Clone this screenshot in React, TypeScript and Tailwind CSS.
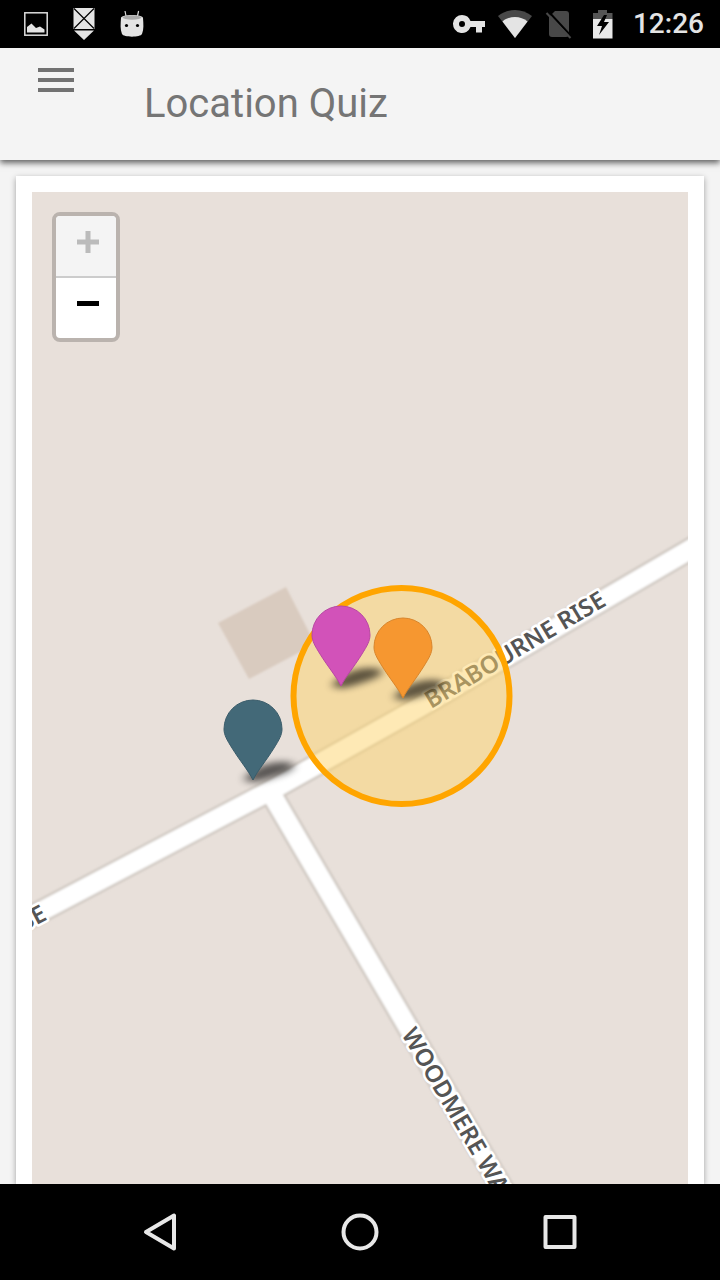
import { useState } from "react";

type PinProps = { x: number; y: number; color: string; edge: string };

function Pin({ x, y, color, edge }: PinProps) {
  return (
    <g transform={`translate(${x} ${y})`}>
      <path
        d="M-9 0 C-4 -8 10 -19 32 -18 C48 -17 40 -9 26 -5 C14 -1 0 5 -9 0Z"
        fill="#000"
        opacity="0.62"
        filter="url(#pin-shadow)"
      />
      <path
        d="M0 0 C-5 -10 -13 -19 -21 -32 C-26 -40 -29 -45 -29 -51 A29 29 0 0 1 29 -51 C29 -45 26 -40 21 -32 C13 -19 5 -10 0 0Z"
        fill={color}
        stroke={edge}
        strokeWidth="1"
      />
    </g>
  );
}

function MapDrawing() {
  return (
    <svg
      viewBox="32 192 656 992"
      preserveAspectRatio="xMidYMin slice"
      className="block h-full w-full"
      role="img"
      aria-label="Street map"
    >
      <defs>
        <filter id="pin-shadow" x="-50%" y="-80%" width="200%" height="260%">
          <feGaussianBlur stdDeviation="5 3.5" />
        </filter>
        <filter id="soft" x="-5%" y="-5%" width="110%" height="110%">
          <feGaussianBlur stdDeviation="0.8" />
        </filter>
      </defs>
      <g filter="url(#soft)">
        <path d="M218 623 L286 587 L310 634 L302 651 L249 679Z" fill="#d9cbbf" />
        <g fill="none" stroke="#d0c9c2" strokeWidth="24">
          <path d="M0 933 L150 854 L272 790 L420 707 L720 532" />
          <path d="M272 795 L392 1000 L522 1222" />
        </g>
        <g fill="none" stroke="#fff" strokeWidth="19">
          <path d="M0 933 L150 854 L272 790 L420 707 L720 532" />
          <path d="M272 795 L392 1000 L522 1222" />
        </g>
      </g>
      <g
        className="font-['Noto_Sans','Open_Sans',sans-serif] text-2xl font-semibold"
        fill="#555"
        stroke="#fff"
        strokeWidth="5"
        strokeLinejoin="round"
        paintOrder="stroke"
      >
        <text transform="translate(431 709) rotate(-30.6)">BRABOURNE RISE</text>
        <text transform="translate(401 1034) rotate(59.6)">WOODMERE WAY</text>
        <text transform="translate(48 919) rotate(-27.7)" textAnchor="end">
          BRABOURNE RISE
        </text>
      </g>
      <circle
        cx="401.5"
        cy="696"
        r="108"
        fill="#fdd36b"
        fillOpacity="0.5"
        stroke="#ffa500"
        strokeWidth="6"
      />
      <Pin x={341} y={686} color="#d252b9" edge="#b848a3" />
      <Pin x={403} y={698} color="#f69730" edge="#d9852b" />
      <Pin x={253} y={780} color="#436978" edge="#3a5c6a" />
    </svg>
  );
}

function StatusBar() {
  return (
    <div className="flex h-12 shrink-0 items-center justify-between bg-black pl-6 pr-4">
      <div className="flex items-center gap-6">
        <svg viewBox="0 0 24 24" className="size-6" aria-hidden="true">
          <rect x="0.8" y="0.8" width="22.4" height="22.4" fill="none" stroke="#ddd" strokeWidth="1.5" />
          <path d="M3 20.5 V15 L7.5 11.5 L12 16 L16 14.5 L20.5 17.5 V20.5Z" fill="#e4e4e4" />
        </svg>
        <svg viewBox="0 0 24 34" className="h-9 w-6" aria-hidden="true">
          <path d="M1.5 1 H22.5 V22 H1.5Z M2 23.5 H22 L12 33Z" fill="#e4e4e4" />
          <path d="M2 1.5 L22 21.5 M22 1.5 L2 21.5" stroke="#000" strokeWidth="1.2" />
        </svg>
        <svg viewBox="0 0 24 28" className="h-8 w-6" aria-hidden="true">
          <path d="M6 6 L5 1 M17.5 6 L18.6 1" stroke="#ddd" strokeWidth="1.2" />
          <path d="M1 8 C1 4 23 4 23 8 C23.4 14 24 19 22 24 C20.5 27.5 3.5 27.5 2 24 C0 19 0.6 14 1 8Z" fill="#e4e4e4" />
          <ellipse cx="12" cy="7.5" rx="9.5" ry="2.2" fill="#aaa" />
          <circle cx="6.5" cy="15.5" r="1.6" fill="#000" />
          <circle cx="17.5" cy="15.5" r="1.6" fill="#000" />
        </svg>
      </div>
      <div className="flex items-center">
        <svg viewBox="0 0 32 18" className="mr-3 h-5 w-8" aria-hidden="true">
          <path
            fillRule="evenodd"
            d="M9 0 A9 9 0 1 0 17.5 12 H23 V17.5 H29 V12 H32 V6 H17.5 A9 9 0 0 0 9 0Z M9 6 A3 3 0 1 1 9 12 A3 3 0 1 1 9 6Z"
            fill="#e4e4e4"
          />
        </svg>
        <svg viewBox="0 0 36 30" className="mr-3 h-8 w-9" aria-hidden="true">
          <path d="M1 7 C11 -1 25 -1 35 7 L18 29Z" fill="#484848" />
          <path d="M5.5 12.5 C12 6.5 24 6.5 30.5 12.5 L18 29Z" fill="#e4e4e4" />
        </svg>
        <svg viewBox="0 0 28 30" className="mr-5 h-8 w-7" aria-hidden="true">
          <path d="M10 2 H21 Q24 2 24 5 V25 Q24 28 21 28 H7 Q4 28 4 25 V8Z" fill="#484848" />
          <path d="M3 2 L27 28" stroke="#000" strokeWidth="2" />
          <path d="M1.5 4 L25.5 29" stroke="#484848" strokeWidth="2" />
        </svg>
        <svg viewBox="0 0 20 30" className="mr-5 h-8 w-5" aria-hidden="true">
          <path d="M0 10 V4 H5 V1 H14 V4 H19.5 V10Z" fill="#555" />
          <path d="M0 10 H19.5 V29.5 H0Z" fill="#e8e8e8" />
          <path d="M11 6 L4 17 H9 L6 26 L16 13 H11 L14 6Z" fill="#000" />
        </svg>
        <span className="font-[Roboto,sans-serif] text-[28px] font-medium leading-8 text-[#e4e4e4]">
          12:26
        </span>
      </div>
    </div>
  );
}

export default function App() {
  const [zoom, setZoom] = useState(18);
  return (
    <div className="flex h-screen flex-col overflow-hidden bg-[#f4f4f4] font-[Roboto,sans-serif]">
      <StatusBar />
      <header className="z-10 flex h-28 shrink-0 items-start bg-[#f4f4f4] shadow-[0_3px_6px_rgba(0,0,0,0.6)]">
        <button type="button" aria-label="Open menu" className="flex h-16 w-28 items-center justify-center">
          <span className="flex w-9 flex-col gap-1.5">
            <span className="h-1 bg-[#727272]" />
            <span className="h-1 bg-[#727272]" />
            <span className="h-1 bg-[#727272]" />
          </span>
        </button>
        <h1 className="pl-8 text-[40px] leading-28 text-[#757575]">Location Quiz</h1>
      </header>
      <main className="flex min-h-0 grow flex-col px-4 pt-4">
        <section className="relative min-h-0 grow bg-white px-4 pt-4 shadow-[0_2px_6px_rgba(0,0,0,0.35)]">
          <div className="h-full bg-[#e8e0da]">
            <MapDrawing />
          </div>
          <div className="absolute left-9 top-9 flex w-17 flex-col overflow-hidden rounded-lg border-4 border-[#bab3ae] bg-white">
            <button
              type="button"
              aria-label="Zoom in"
              disabled={zoom >= 18}
              onClick={() => setZoom(zoom + 1)}
              className="flex h-[62px] items-start justify-center border-b-2 border-[#ccc] bg-[#f4f4f4] pl-1 pt-[15px] text-[#bbb]"
            >
              <svg viewBox="0 0 22 22" className="size-[22px]" aria-hidden="true">
                <path d="M11 0 V22 M0 11 H22" stroke="currentColor" strokeWidth="5" />
              </svg>
            </button>
            <button
              type="button"
              aria-label="Zoom out"
              onClick={() => setZoom(zoom - 1)}
              className="flex h-[60px] items-start justify-center pl-1 pt-[15px] text-black"
            >
              <svg viewBox="0 0 22 22" className="size-[22px]" aria-hidden="true">
                <path d="M0 10.5 H22" stroke="currentColor" strokeWidth="5" />
              </svg>
            </button>
          </div>
        </section>
      </main>
      <nav className="z-10 flex h-24 shrink-0 items-center justify-center gap-40 bg-black">
        <button type="button" aria-label="Back" className="size-10">
          <svg viewBox="0 0 40 40" fill="none" stroke="#e8e8e8" strokeWidth="4" strokeLinejoin="round">
            <path d="M34 3.5 V36.5 L6 20Z" />
          </svg>
        </button>
        <button type="button" aria-label="Home" className="size-10">
          <svg viewBox="0 0 40 40" fill="none" stroke="#e8e8e8" strokeWidth="4">
            <circle cx="20" cy="20" r="16.5" />
          </svg>
        </button>
        <button type="button" aria-label="Recent apps" className="size-10">
          <svg viewBox="0 0 40 40" fill="none" stroke="#e8e8e8" strokeWidth="4" strokeLinejoin="round">
            <rect x="5.5" y="5" width="29" height="30" />
          </svg>
        </button>
      </nav>
    </div>
  );
}
